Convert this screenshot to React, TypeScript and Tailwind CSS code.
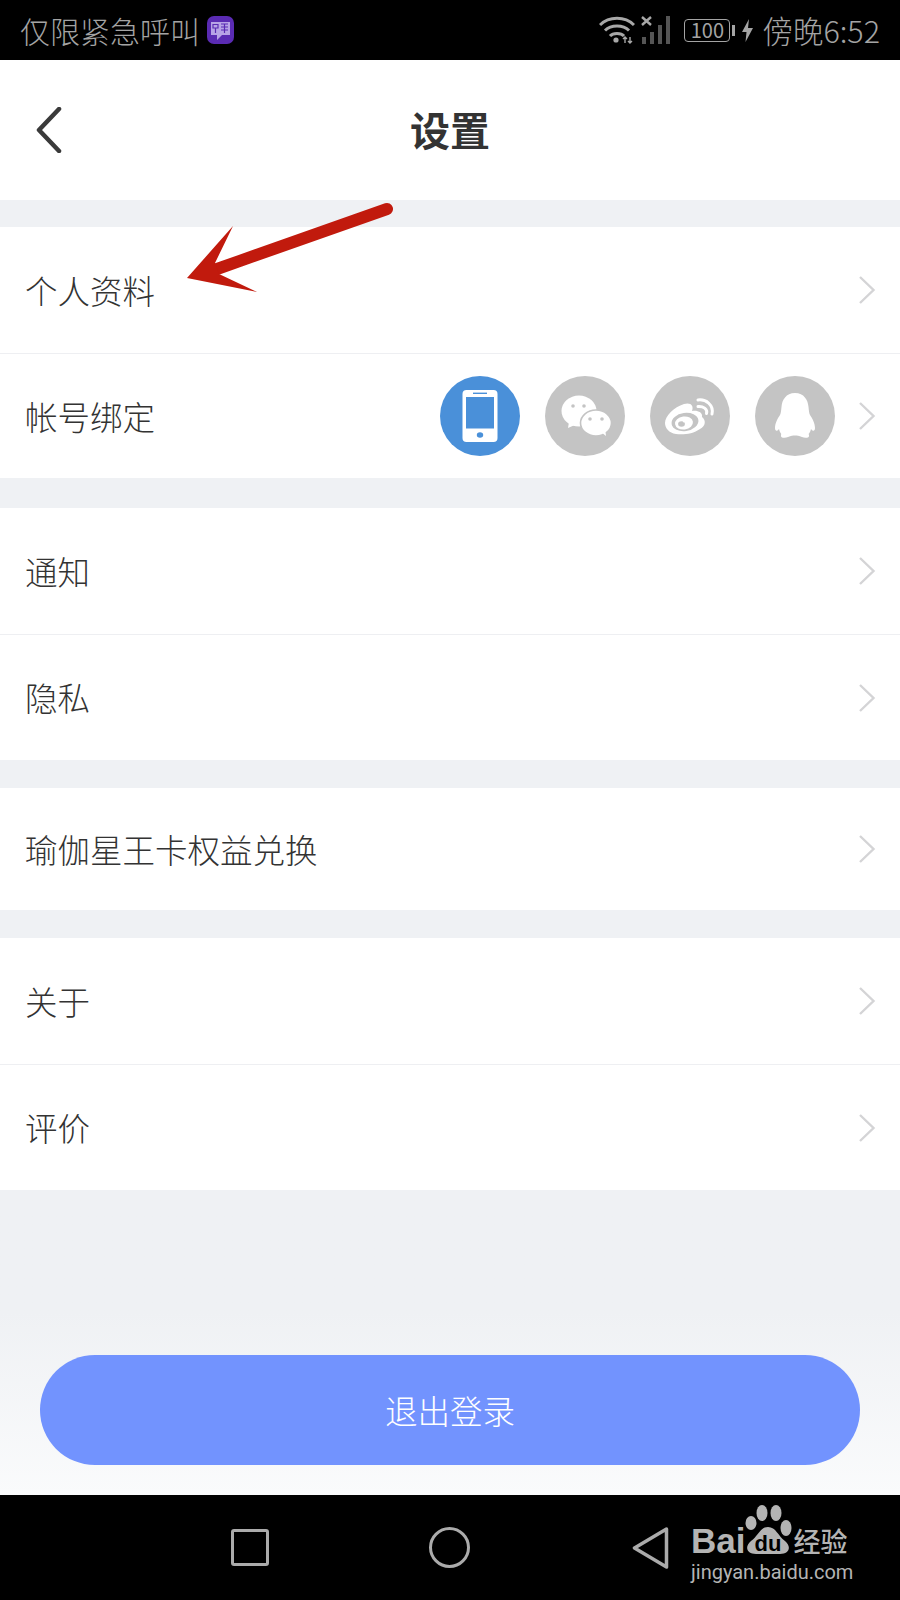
import { ReactNode } from 'react';

const cjk = "font-['Noto_Sans_CJK_SC','Noto_Sans',sans-serif]";

function ChevronRight() {
  return (
    <svg width="18" height="30" viewBox="0 0 18 30" fill="none" className="shrink-0">
      <path d="M2 2 L15.5 15 L2 28" stroke="#d4d4d6" strokeWidth="2.4" />
    </svg>
  );
}

function Row({ label, height, border, children }: { label: string; height: string; border?: boolean; children?: ReactNode }) {
  return (
    <div className={`flex items-center bg-white pl-[25px] pr-[24px] ${height} ${border ? 'border-b border-[#eeeff2]' : ''}`}>
      <span className="text-[32.5px] font-light leading-none text-[#333333]">{label}</span>
      <div className="ml-auto flex items-center">
        {children}
        <ChevronRight />
      </div>
    </div>
  );
}

function Bound({ color, children }: { color: string; children: ReactNode }) {
  return <div className={`flex h-20 w-20 items-center justify-center rounded-full ${color}`}>{children}</div>;
}

function PhoneGlyph() {
  return (
    <svg width="36" height="52" viewBox="0 0 36 52">
      <rect x="0.5" y="0" width="35" height="52" rx="4" fill="#fff" />
      <rect x="4" y="7" width="28" height="31.5" fill="#4a90d9" />
      <rect x="11" y="2.6" width="14" height="1.4" fill="#4a90d9" />
      <ellipse cx="18" cy="45" rx="3.2" ry="2.8" fill="#4a90d9" />
    </svg>
  );
}

function WechatGlyph() {
  return (
    <svg width="80" height="80" viewBox="0 0 80 80">
      <ellipse cx="34" cy="35" rx="17.5" ry="15.5" fill="#fff" />
      <path d="M24 46 L23 52 L32 48 Z" fill="#fff" />
      <circle cx="28" cy="30" r="1.8" fill="#c4c4c4" />
      <circle cx="39" cy="30" r="1.8" fill="#c4c4c4" />
      <ellipse cx="51" cy="47" rx="15.5" ry="13" fill="#fff" stroke="#c4c4c4" strokeWidth="1.6" />
      <path d="M56 56 L61 60 L60 52 Z" fill="#fff" />
      <circle cx="45" cy="43" r="1.8" fill="#c4c4c4" />
      <circle cx="57" cy="43" r="1.8" fill="#c4c4c4" />
    </svg>
  );
}

function WeiboGlyph() {
  return (
    <svg width="80" height="80" viewBox="0 0 80 80">
      <path d="M15 47 C15 40 24 31 34 28 C41 26 44 30 42 35 C47 34 53 36 52 41 C56 44 56 50 50 53 C43 58 33 59 26 58 C19 57 15 52 15 47 Z" fill="#fff" />
      <ellipse cx="35" cy="46" rx="13.5" ry="9" transform="rotate(-8 35 46)" fill="#c4c4c4" />
      <ellipse cx="34" cy="47" rx="9" ry="6.5" transform="rotate(-8 34 47)" fill="#fff" />
      <ellipse cx="31.5" cy="48" rx="3.4" ry="2.8" fill="#c4c4c4" />
      <circle cx="34" cy="45.5" r="1" fill="#fff" />
      <path d="M48 24 C56 23 64 29 62 38" stroke="#fff" strokeWidth="3" fill="none" strokeLinecap="round" />
      <path d="M48 30.5 C53 30 58 33 56.5 37.5" stroke="#fff" strokeWidth="3" fill="none" strokeLinecap="round" />
    </svg>
  );
}

function QqGlyph() {
  return (
    <svg width="80" height="80" viewBox="0 0 80 80">
      <path
        d="M40 17 C49 17 53 24 53.5 31 C54 35 54 37 55 39 C57 42 60 47 60 52 C60 55 58 56 56 53 C55 58 53 57 54 59 C55 62 50 62.5 47 61 C44 59.5 42 59.5 40 59.5 C38 59.5 36 59.5 33 61 C30 62.5 25 62 26 59 C27 57 25 58 24 53 C22 56 20 55 20 52 C20 47 23 42 25 39 C26 37 26 35 26.5 31 C27 24 31 17 40 17 Z"
        fill="#fff"
      />
    </svg>
  );
}

function WifiGlyph() {
  return (
    <svg width="36" height="28" viewBox="0 0 36 28" fill="none" stroke="#a8a8a8">
      <path d="M1 9 C10 0 26 0 35 9" strokeWidth="3" />
      <path d="M6 14.5 C12 8.5 24 8.5 30 14.5" strokeWidth="3" />
      <path d="M11 20 C14 16.5 22 16.5 25 20" strokeWidth="3" />
      <circle cx="17" cy="24" r="2.6" fill="#a8a8a8" stroke="none" />
      <path d="M26 21 V27 M24 23 L26 21 L28 23 M31 27 V21 M29 25 L31 27 L33 25" strokeWidth="1.4" />
    </svg>
  );
}

function SignalGlyph() {
  return (
    <svg width="32" height="28" viewBox="0 0 32 28">
      <rect x="1" y="21" width="4" height="7" fill="#555" />
      <rect x="9" y="16" width="4" height="12" fill="#555" />
      <rect x="17" y="9" width="4" height="19" fill="#555" />
      <rect x="25" y="0" width="4" height="28" fill="#555" />
      <path d="M1 1 L10 9 M10 1 L1 9" stroke="#a8a8a8" strokeWidth="2.4" />
    </svg>
  );
}

function AppBadge() {
  return (
    <svg width="27" height="28" viewBox="0 0 27 28" className="ml-[7px]">
      <rect width="27" height="28" rx="7" fill="#5a2bb3" />
      <path d="M4 6 H23 V19 H15 L10 24 V19 H4 Z" fill="#b7a3e6" />
      <path d="M6 8.5 H11 V12 H6 Z M14 8 H21 M14 11 H21 M14 14 H21 M17.5 8 V17 M8.5 12 V17" stroke="#5a2bb3" strokeWidth="1.2" fill="none" />
    </svg>
  );
}

function BaiduPaw() {
  return (
    <svg width="48" height="50" viewBox="0 0 48 50" fill="#b4b4b4">
      <ellipse cx="6" cy="18" rx="5.5" ry="7" />
      <ellipse cx="17" cy="8" rx="5.5" ry="8" />
      <ellipse cx="31" cy="8" rx="5.5" ry="8" />
      <ellipse cx="41" cy="23" rx="5.5" ry="8" />
      <path d="M23 22 C31 22 33 31 40 36 C47 42 44 49 35 49 L11 49 C2 49 -1 42 6 36 C13 31 15 22 23 22 Z" />
    </svg>
  );
}

export default function App() {
  return (
    <div className={`relative flex h-[1600px] w-[900px] flex-col overflow-hidden bg-[#eff1f4] ${cjk}`}>
      {/* status bar */}
      <div className="flex h-[60px] items-center bg-black pl-[20px] pr-[20px] text-[#a4a4a4]">
        <span className="text-[30px] font-light leading-none">仅限紧急呼叫</span>
        <AppBadge />
        <div className="ml-auto flex items-center">
          <WifiGlyph />
          <div className="ml-[6px]"><SignalGlyph /></div>
          <div className="ml-[11px] flex h-[23px] w-[46px] items-center justify-center rounded-[4px] border border-[#a4a4a4] text-[20px] leading-none">100</div>
          <div className="ml-[2px] h-[11px] w-[3px] bg-[#a4a4a4]" />
          <svg width="11" height="23" viewBox="0 0 11 23" className="ml-[7px]">
            <path d="M7 0 L0 13 H4.5 L3.5 23 L11 9 H6 Z" fill="#a4a4a4" />
          </svg>
          <span className="ml-[9px] text-[30.5px] font-light leading-none">傍晚6:52</span>
        </div>
      </div>

      {/* header */}
      <div className="relative flex h-[140px] items-center justify-center bg-white">
        <svg width="26" height="46" viewBox="0 0 26 46" fill="none" className="absolute left-[36px] top-[47px]">
          <path d="M23 2 L3 23 L23 44" stroke="#3a3a3a" strokeWidth="4.5" strokeLinecap="round" strokeLinejoin="round" />
        </svg>
        <h1 className="pb-[2px] text-[40px] font-bold leading-none text-[#333333]">设置</h1>
      </div>

      <div className="mt-[27px]">
        <Row label="个人资料" height="h-[127px]" border />
        <Row label="帐号绑定" height="h-[124px]">
          <div className="mr-[23px] flex gap-[25px]">
            <Bound color="bg-[#4a90d9]"><PhoneGlyph /></Bound>
            <Bound color="bg-[#c4c4c4]"><WechatGlyph /></Bound>
            <Bound color="bg-[#c4c4c4]"><WeiboGlyph /></Bound>
            <Bound color="bg-[#c4c4c4]"><QqGlyph /></Bound>
          </div>
        </Row>
      </div>

      <div className="mt-[30px]">
        <Row label="通知" height="h-[127px]" border />
        <Row label="隐私" height="h-[125px]" />
      </div>

      <div className="mt-[28px]">
        <Row label="瑜伽星王卡权益兑换" height="h-[122px]" />
      </div>

      <div className="mt-[28px]">
        <Row label="关于" height="h-[127px]" border />
        <Row label="评价" height="h-[125px]" />
      </div>

      {/* logout */}
      <div className="flex flex-1 flex-col justify-end bg-linear-to-b from-[#eff1f4] from-40% to-[#fafbfc] px-[40px] pb-[30px]">
        <button className="flex h-[110px] w-[820px] items-center justify-center rounded-[55px] bg-[#7293fe] text-[32.5px] font-light leading-none text-white">
          退出登录
        </button>
      </div>

      {/* nav bar */}
      <div className="flex h-[105px] items-start bg-black pl-[231px] pt-[32px]">
        <div className="mt-[2px] h-[37px] w-[38px] rounded-[3px] border-[3.5px] border-[#ababab]" />
        <div className="ml-[160px] h-[41px] w-[41px] rounded-full border-[3.5px] border-[#ababab]" />
        <svg width="37" height="42" viewBox="0 0 37 42" fill="none" className="ml-[162px]">
          <path d="M34.5 2 L2.5 21 L34.5 40 Z" stroke="#ababab" strokeWidth="3.5" strokeLinejoin="round" />
        </svg>
      </div>

      {/* red annotation arrow */}
      <svg width="900" height="110" viewBox="0 200 900 110" className="absolute left-0 top-[200px]">
        <path d="M387 209 L217 269" stroke="#c11a0d" strokeWidth="12" strokeLinecap="round" />
        <path d="M187 278 L233 226 L215 263 L219 274 L257 292 Z" fill="#c11a0d" />
      </svg>

      {/* watermark */}
      <div className="absolute left-[691px] top-[1505px] w-[165px] text-[#b4b4b4]">
        <div className="flex items-start">
          <span className="mt-[18px] text-[35px] font-bold leading-[35px] font-['Liberation_Sans',sans-serif]">Bai</span>
          <div className="relative">
            <BaiduPaw />
            <span className="absolute left-[9px] top-[30px] text-[22px] font-bold leading-[18px] text-black font-['Liberation_Sans',sans-serif]">du</span>
          </div>
          <span className="mt-[22px] whitespace-nowrap text-[27px] font-medium leading-none">经验</span>
        </div>
        <div className="mt-[4px] text-[20px] leading-none font-['Roboto',sans-serif]">jingyan.baidu.com</div>
      </div>
    </div>
  );
}
